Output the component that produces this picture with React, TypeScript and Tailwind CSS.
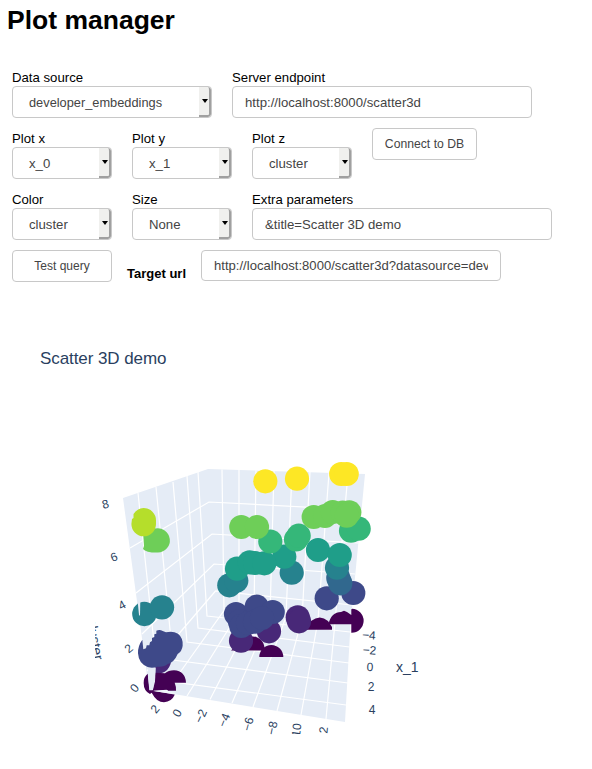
import React from "react";

const V = {
  yellow: "#fde725", lime: "#b5de2b", green: "#6ece58", mint: "#35b779", teal: "#1f9e89",
  cyan: "#26828e", steel: "#31688e", blue: "#3e4989", violet: "#482878", dark: "#440154",
};

const gridLines: string[] = [
  // left wall and back wall, constant z
  "130,548 209,502 362,510", "136,593 212,534 358.5,543", "142,634 214,564 355,574", "147,671 215.5,591 352,605",
  // constant y, left wall then floor
  "198,472 207,616 350,632", "187,476 198,628 349.5,647", "173,482 187,642 349,663", "156,487 173,660 348,683", "138,493 158,680 346,705",
  // constant x, back wall then floor
  "222,469.5 224,610.5 166,692", "239,470 239,612 187,696", "256,470.5 254,613.5 210,699.5", "274,471 270,615 232,703",
  "292,471.5 286,617 253,707", "310,472 302,619 277,711", "329,473 318,620.5 301,715", "348,473.5 335,622 326,719",
];

const points: [number, number, string][] = [
  [229.3, 585.3, V.cyan], [236.3, 580.7, V.cyan], [291.7, 572.7, V.cyan],
  [353.3, 593, V.blue], [326.7, 598.3, V.blue],
  [338.3, 578, V.steel], [340.3, 583.3, V.steel],
  [337, 567.7, V.cyan],
  [284.3, 556.7, V.teal], [237, 568.7, V.teal], [249.7, 562.3, V.teal], [255, 563, V.teal], [264.3, 563.3, V.teal],
  [318, 550, V.teal], [339.7, 555, V.teal],
  [270.3, 541.5, V.mint], [296, 539.5, V.mint], [298.7, 535.7, V.mint], [351, 530.7, V.mint], [358.7, 528.7, V.mint],
  [241.3, 527, V.green], [257, 527, V.green], [313.7, 517, V.green], [325, 516, V.green],
  [332.7, 512, V.green], [342.7, 512.7, V.green], [349.3, 512.3, V.green], [346.7, 515.7, V.green],
  [265.3, 481.3, V.yellow], [297, 478.7, V.yellow], [341.2, 474, V.yellow], [346.7, 474, V.yellow],
  [269, 631.3, V.violet], [241, 640.7, V.violet], [297.7, 617.3, V.violet], [299, 621.3, V.violet],
  [236, 614, V.blue], [256.7, 606.7, V.blue], [272.7, 612, V.blue], [239.8, 621, V.blue], [241.3, 626, V.blue],
  [248, 623, V.blue], [255, 621.7, V.blue], [262, 618, V.blue],
];

const ticks: [string, number, number, number][] = [
  ["8", 105.5, 504, -15], ["6", 114, 557, -20], ["4", 122, 605, -28], ["2", 128.5, 648.5, -40], ["0", 134.5, 688, -50],
  ["2", 155, 709, -50], ["0", 177, 713, -60], ["−2", 200.5, 716, -65], ["−4", 224, 720, -68], ["−6", 248, 724, -74],
  ["−8", 272, 728, -78],
  ["−4", 369, 635, 4], ["−2", 369.5, 650, 4], ["0", 370, 667, 2], ["2", 371, 686.5, 0], ["4", 372, 710, 0],
];

function Scatter() {
  return (
    <svg className="block h-[440px] w-[592px]" viewBox="0 329 592 440" fontFamily='"Liberation Sans", Arial, sans-serif' fill="#2a3f5f">
      <text x="40" y="364" fontSize="17" textLength="126.5">Scatter 3D demo</text>
      <path d="M123 498L208 469L365 474L350.5 624L345 722L149 690Z" fill="#e5ecf6" />
      <g fill="none" stroke="#fff" strokeWidth="1.2">
        {gridLines.map((p) => <polyline key={p} points={p} />)}
      </g>
      <g fill={V.dark}>
        <path d="M231 650.5L236 646L241 641L252 636.5A12 12 0 0 1 264.3 650.5Z" />
        <path d="M259.3 657a12 12 0 0 1 24 0Z" />
        <path d="M304 629.7L311 621Q320 614 328 621L332 627V629.7Z" />
        <path d="M328.5 624.3C330 616 335 612 341 612L344 610.8L347 612L351.3 615V609.5L352 608.7A12 12 0 0 1 351.3 632.7V624.3Z" />
      </g>
      {points.map(([x, y, c], i) => <circle key={i} cx={x} cy={y} r="12.1" fill={c} />)}
      <path d="M143.3 535L155 528.5A12.2 12.2 0 1 1 158 552.6Q146 552.8 143 549L144 546Z" fill={V.green} />
      <path d="M133.5 514Q138 508 143.7 508.1A12.3 12.3 0 0 1 156 520.5V524A12.2 12.2 0 0 1 131.4 524L132 519L133.5 518Z" fill={V.lime} />
      <g transform="translate(80 600) scale(.33333)">
        <circle cx="193" cy="42" r="36.5" fill={V.cyan} />
        <circle cx="246" cy="22" r="36.5" fill={V.cyan} />
        <path d="M173 5L181 -3L180 48L177 44Z" fill="#e5ecf6" />
        <path d="M226 180H272V191Q264 214 246 219L226 225Z" fill={V.violet} />
        <path d="M203 221Q190 232 191 249Q191 273 210 282L215 278Q230 307 252 307Q275 306 285 283L219 273L263 270V272H288Q289 260 284 248H318Q316 213 282 211Q265 211 255 220L226 218L219 270L209 270Z" fill={V.dark} />
        <path d="M204 203H227L225 245L218 271H208L204 230Z" fill="#e5ecf6" />
        <path d="M219 272L260 269L263 273L287 279V284Z" fill="#eef2f9" />
        <path d="M187 119L190 148L198 145L200 136H208L210 127L216 123V114L223 111V103L229 101V92Q239 87 248 93L258 97Q278 92 294 101Q310 114 308 137Q306 154 293 162Q282 188 263 192Q252 202 232 200Q217 206 203 201Q176 191 174 160Q173 138 187 119Z" fill={V.blue} />
      </g>
      <g fontSize="12" textAnchor="middle">
        {ticks.map(([s, x, y, a], i) => <text key={i} transform={`translate(${x} ${y}) rotate(${a})`} y="4.2">{s}</text>)}
      </g>
      <text x="396" y="672" fontSize="14">x_1</text>
      <svg x="95" y="618" width="12" height="50" viewBox="95 618 12 50">
        <text transform="translate(86.5 620) rotate(79.5)" fontSize="14">cluster</text>
      </svg>
      <svg x="285" y="715" width="50" height="19" viewBox="285 715 50 19">
        <g fontSize="12" textAnchor="end">
          <text transform="translate(301.5 724) rotate(-82)">10</text>
          <text transform="translate(328 727) rotate(-84)">2</text>
        </g>
      </svg>
    </svg>
  );
}

function Select({ label, value, wide = false }: { label: string; value: string; wide?: boolean }) {
  return (
    <div className={wide ? "w-[200px]" : "w-[100px]"}>
      <div className="h-[17px] pt-px leading-4">{label}</div>
      <div className="flex h-8 justify-between overflow-hidden rounded border border-[#c8c8c8] text-[#444]">
        <span className={wide ? "pl-4 text-[12.8px] leading-8" : "pl-4 leading-8"}>{value}</span>
        <span className="flex w-[12px] items-center justify-center rounded-r-[3px] border-r-2 border-b-2 border-[#a0a0a0] bg-[#f0f0ee] pl-0.5">
          <span className="shrink-0 border-x-[3.5px] border-t-4 border-x-transparent border-t-black" />
        </span>
      </div>
    </div>
  );
}

function Field({ label, value }: { label: string; value: string }) {
  return (
    <label className="block w-[300px]">
      <span className="block h-[17px] pt-px leading-4">{label}</span>
      <input readOnly defaultValue={value} className="block h-8 w-full rounded border border-[#c8c8c8] bg-white px-3 text-[#444] outline-none" />
    </label>
  );
}

export default function App() {
  return (
    <main className="h-[769px] w-[592px] overflow-hidden bg-white font-['Liberation_Sans',Arial,sans-serif] text-[13.2px] text-black">
      <h1 className="h-[69px] pt-[5px] pl-[7px] text-[26.5px] leading-[30px] font-bold">Plot manager</h1>
      <div className="flex h-[61px] gap-5 pl-3">
        <Select label="Data source" value="developer_embeddings" wide />
        <Field label="Server endpoint" value="http://localhost:8000/scatter3d" />
      </div>
      <div className="flex h-[61px] gap-5 pl-3">
        <Select label="Plot x" value="x_0" />
        <Select label="Plot y" value="x_1" />
        <Select label="Plot z" value="cluster" />
        <button className="-mt-0.5 h-8 w-[105px] rounded border border-[#c8c8c8] text-[12.2px] text-[#444]">Connect to DB</button>
      </div>
      <div className="flex h-[59px] gap-5 pl-3">
        <Select label="Color" value="cluster" />
        <Select label="Size" value="None" />
        <Field label="Extra parameters" value="&title=Scatter 3D demo" />
      </div>
      <div className="flex h-[79px] items-start pl-3">
        <button className="h-8 w-[100px] rounded border border-[#c8c8c8] text-xs text-[#444]">Test query</button>
        <span className="mt-4 ml-[15px] w-[74px] text-[13px] leading-4 font-bold">Target url</span>
        <div className="flex h-[31px] w-[300px] items-center rounded border border-[#c8c8c8] px-3 text-[#444]">
          <span className="overflow-hidden text-[13.1px] whitespace-nowrap">http://localhost:8000/scatter3d?datasource=developer_embeddings</span>
        </div>
      </div>
      <Scatter />
    </main>
  );
}
